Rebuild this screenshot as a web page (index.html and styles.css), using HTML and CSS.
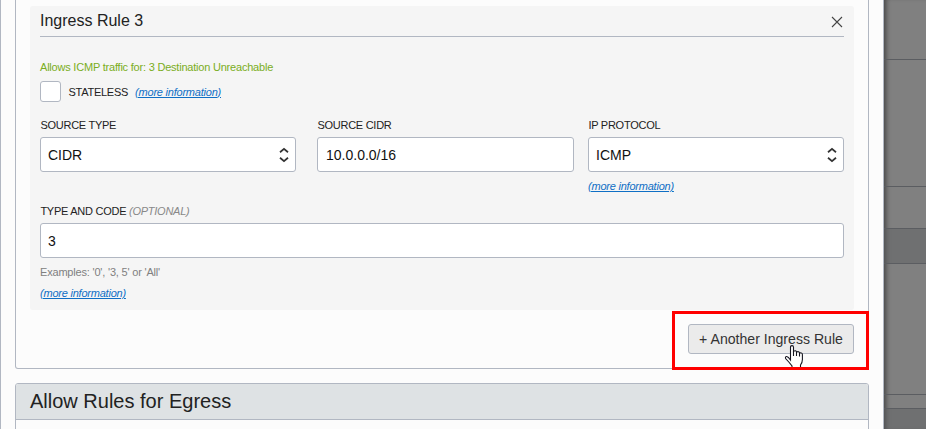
FILE: index.html
```html
<!DOCTYPE html>
<html lang="en">
<head>
<meta charset="utf-8">
<title>Security List Rules</title>
<link rel="stylesheet" href="styles.css">
</head>
<body>
<div class="screen">
  <main class="dialog">
    <section class="panel ingress">
      <div class="rule">
        <header class="rule-head">
          <h3><span>Ingress Rule 3</span></h3>
          <svg class="close" width="12" height="12" viewBox="0 0 12 12"><path d="M1 1L11 11M11 1L1 11"/></svg>
        </header>
        <p class="summary"><span>Allows ICMP traffic for: 3 Destination Unreachable</span></p>
        <div class="stateless">
          <i class="checkbox"></i>
          <label>STATELESS</label>
          <a class="more">(more information)</a>
        </div>
        <div class="fields">
          <div class="field">
            <label>SOURCE TYPE</label>
            <div class="control select">
              <span>CIDR</span>
              <svg width="10" height="16" viewBox="0 0 10 16"><path d="M1 5.2L5 1.9L9 5.2M1 10.8L5 14.1L9 10.8"/></svg>
            </div>
          </div>
          <div class="field">
            <label>SOURCE CIDR</label>
            <div class="control"><span>10.0.0.0/16</span></div>
          </div>
          <div class="field">
            <label>IP PROTOCOL</label>
            <div class="control select">
              <span>ICMP</span>
              <svg width="10" height="16" viewBox="0 0 10 16"><path d="M1 5.2L5 1.9L9 5.2M1 10.8L5 14.1L9 10.8"/></svg>
            </div>
            <a class="more">(more information)</a>
          </div>
        </div>
        <div class="field code">
          <label>TYPE AND CODE <em>(OPTIONAL)</em></label>
          <div class="control select"><span>3</span></div>
          <p class="hint">Examples: '0', '3, 5' or 'All'</p>
          <a class="more">(more information)</a>
        </div>
      </div>
      <div class="actions">
        <button class="add"><span>+ Another Ingress Rule</span></button>
      </div>
    </section>
    <section class="panel egress">
      <h2><span>Allow Rules for Egress</span></h2>
    </section>
  </main>
  <aside class="backdrop">
    <div class="strip s1"></div>
    <div class="strip s2"></div>
    <div class="strip s3"></div>
    <div class="strip s4 dark"></div>
    <div class="strip s5"></div>
    <div class="strip s6"></div>
    <div class="strip s7 dark"></div>
  </aside>
  <svg class="cursor" width="20" height="24" viewBox="0 0 20 24"><path d="M6.5 15V2.2Q6.5.6 8 .6Q9.5.6 9.5 2.2V6.3Q12 4.9 12.5 7Q15 5.9 15.5 8Q18.4 7.3 18.4 9.8V14.5Q18.4 17.5 16.5 20V23H8V21Q6 18.5 4.8 17L1.6 13.5Q1 11.4 2.8 11.5Q4.2 11.7 6.5 15Z"/><path d="M9.5 6V11M12.5 7V11M15.5 8V11.5"/></svg>
  <div class="highlight"></div>
</div>
</body>
</html>
```
FILE: styles.css
```css
* { box-sizing: border-box; }
body {
  margin: 0;
  overflow: hidden;
  font-family: "Liberation Sans", Arial, sans-serif;
  color: #222;
}
h2, h3, p { margin: 0; font-weight: normal; }
.screen { position: relative; display: flex; width: 926px; height: 429px; overflow: hidden; }
.dialog {
  width: 884px;
  height: 429px;
  padding: 0 14px;
  overflow: hidden;
  background: #fcfcfc;
  border: solid #b1b7c2;
  border-width: 0 1px;
}
.panel { border: 1px solid #b1b7c2; border-radius: 3px; }
.ingress { height: 369px; padding: 6px 14px 0; border-top: 0; border-radius: 0 0 3px 3px; }
.rule { height: 304px; padding: 0 10px; background: #f5f5f5; border-radius: 3px; }
.rule-head {
  display: flex;
  justify-content: space-between;
  height: 31px;
  border-bottom: 1px solid #b1b7c2;
}
.rule-head h3 { font-size: 16px; line-height: 30px; }
.close { margin: 10px 1px 0 0; fill: none; stroke: #444; stroke-width: 1.1; }
.summary { padding-top: 23px; font-size: 11px; line-height: 14px; letter-spacing: -0.21px; color: #7aad1c; }
.stateless { display: flex; align-items: center; height: 21px; margin-top: 7px; }
.checkbox { width: 21px; height: 21px; background: #fff; border: 1px solid #b1b7c2; border-radius: 3px; }
.stateless label { margin: 0 7px 0 7.5px; }
label { display: block; font-size: 11px; line-height: 14px; letter-spacing: -0.26px; white-space: nowrap; }
.field label { padding-left: 0.4px; }
label em { color: #888; }
.more {
  font-size: 11px;
  line-height: 14px;
  font-style: italic;
  letter-spacing: -0.22px;
  text-decoration: underline;
  color: #0f6fc5;
}
.fields { display: grid; grid-template-columns: 256px 257px 256px; column-gap: 21px; height: 86px; margin-top: 16px; }
.field:nth-child(3) { margin-left: -7px; margin-right: 7px; }
.control {
  display: flex;
  align-items: center;
  justify-content: space-between;
  height: 35px;
  margin-top: 5px;
  padding: 0 6px 0 8px;
  font-size: 14px;
  color: #111;
  background: #fff;
  border: 1px solid #b1b7c2;
  border-radius: 3px;
}
.control.select { padding-left: 7px; }
.control svg { fill: none; stroke: #333; stroke-width: 1.8; }
.field .more { display: block; margin-top: 7px; }
.hint { margin-top: 7px; font-size: 11px; line-height: 14px; letter-spacing: -0.19px; color: #808080; }
.actions { display: flex; justify-content: flex-end; margin-top: 14px; }
.add {
  width: 166px;
  height: 30px;
  padding: 0;
  font: 14.1px "Liberation Sans", Arial, sans-serif;
  color: #333;
  white-space: nowrap;
  background: #ebebeb;
  border: 1px solid #b1b7c2;
  border-radius: 3px;
}
.egress { height: 60px; margin-top: 14px; }
.egress h2 {
  height: 36px;
  padding-left: 14px;
  font-size: 20px;
  line-height: 35px;
  background: #dee2e4;
  border-bottom: 1px solid #b1b7c2;
  border-radius: 2px 2px 0 0;
}
.backdrop { width: 42px; background: #808080; box-shadow: inset 5px 0 5px -3px #444; }
.strip { border-bottom: 1px solid #5b5d61; }
.dark { background: rgba(91, 94, 96, .45); }
.s1 { height: 60px; }
.s2 { height: 127px; }
.s3 { height: 42px; }
.s4 { height: 35px; }
.s5 { height: 131px; }
.s6 { height: 14px; }
.s7 { height: 20px; border-bottom: 0; }
.highlight { position: absolute; left: 672px; top: 311px; width: 197px; height: 59px; border: 3px solid #f00; }
.cursor { position: absolute; left: 784px; top: 345px; fill: #fff; stroke: #15151f; stroke-width: 1.1; }
```
